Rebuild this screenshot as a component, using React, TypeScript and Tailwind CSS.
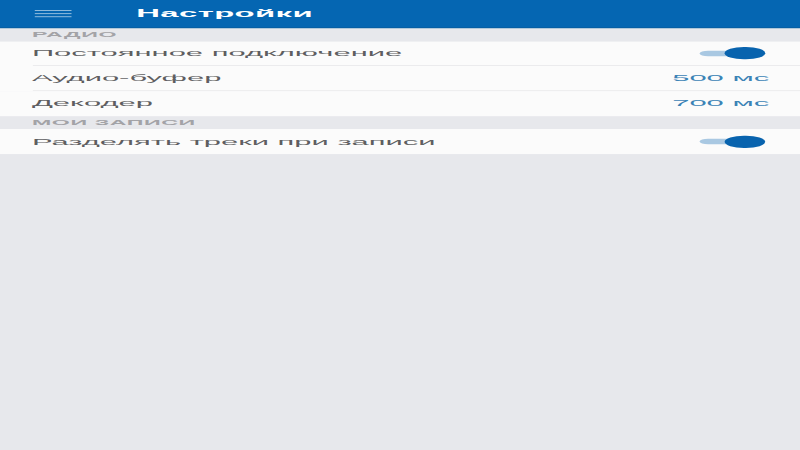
import React from "react";

function Toggle() {
  return (
    <div className="relative w-[34px] h-[20px] flex items-center">
      <div className="w-[30px] h-[9px] rounded-full bg-[#a9c8e2]" />
      <div className="absolute right-0 top-0 w-[21px] h-[20px] rounded-full bg-[#0863ae]" />
    </div>
  );
}

function SectionHeader({ title }: { title: string }) {
  return (
    <div className="h-[21.5px] flex items-center px-[16.5px] text-[12px] font-bold uppercase text-[#a3a3a7] tracking-[0.3px]">
      {title}
    </div>
  );
}

function Row({
  label,
  value,
  toggle,
  last,
}: {
  label: string;
  value?: string;
  toggle?: boolean;
  last?: boolean;
}) {
  return (
    <div className="bg-[#fbfbfb] pl-[16.5px]">
      <div
        className={
          "h-[40.8px] flex items-center justify-between pr-[16px] " +
          (last ? "" : "border-b border-[#e1e1e4]")
        }
      >
        <span className="text-[16px] text-[#5e5e61]">{label}</span>
        {value && <span className="text-[16px] text-[#3c83b6]">{value}</span>}
        {toggle && (
          <div className="mr-[2px]">
            <Toggle />
          </div>
        )}
      </div>
    </div>
  );
}

export default function App() {
  return (
    <div className="w-[800px] h-[450px] overflow-hidden bg-[#e7e8ec]">
      <div className="w-[414px] h-[736px] origin-top-left scale-x-[1.9324] scale-y-[0.6114] bg-[#e7e8ec] font-['Liberation_Sans',Arial,sans-serif]">
        {/* Header */}
        <div className="h-[46px] flex items-center px-[17.5px] bg-[#0566b2] border-b border-[#0a5898]">
          <div className="flex flex-col gap-[3.5px] w-[19px]">
            <div className="h-[1.5px] bg-white/90" />
            <div className="h-[1.5px] bg-white/90" />
            <div className="h-[1.5px] bg-white/90" />
          </div>
          <span className="ml-[34px] text-[17px] font-bold text-white tracking-[0.2px]">Настройки</span>
        </div>

        <SectionHeader title="Радио" />
        <Row label="Постоянное подключение" toggle />
        <Row label="Аудио-буфер" value="500 мс" />
        <Row label="Декодер" value="700 мс" last />

        <SectionHeader title="Мои записи" />
        <Row label="Разделять треки при записи" toggle last />
      </div>
    </div>
  );
}
